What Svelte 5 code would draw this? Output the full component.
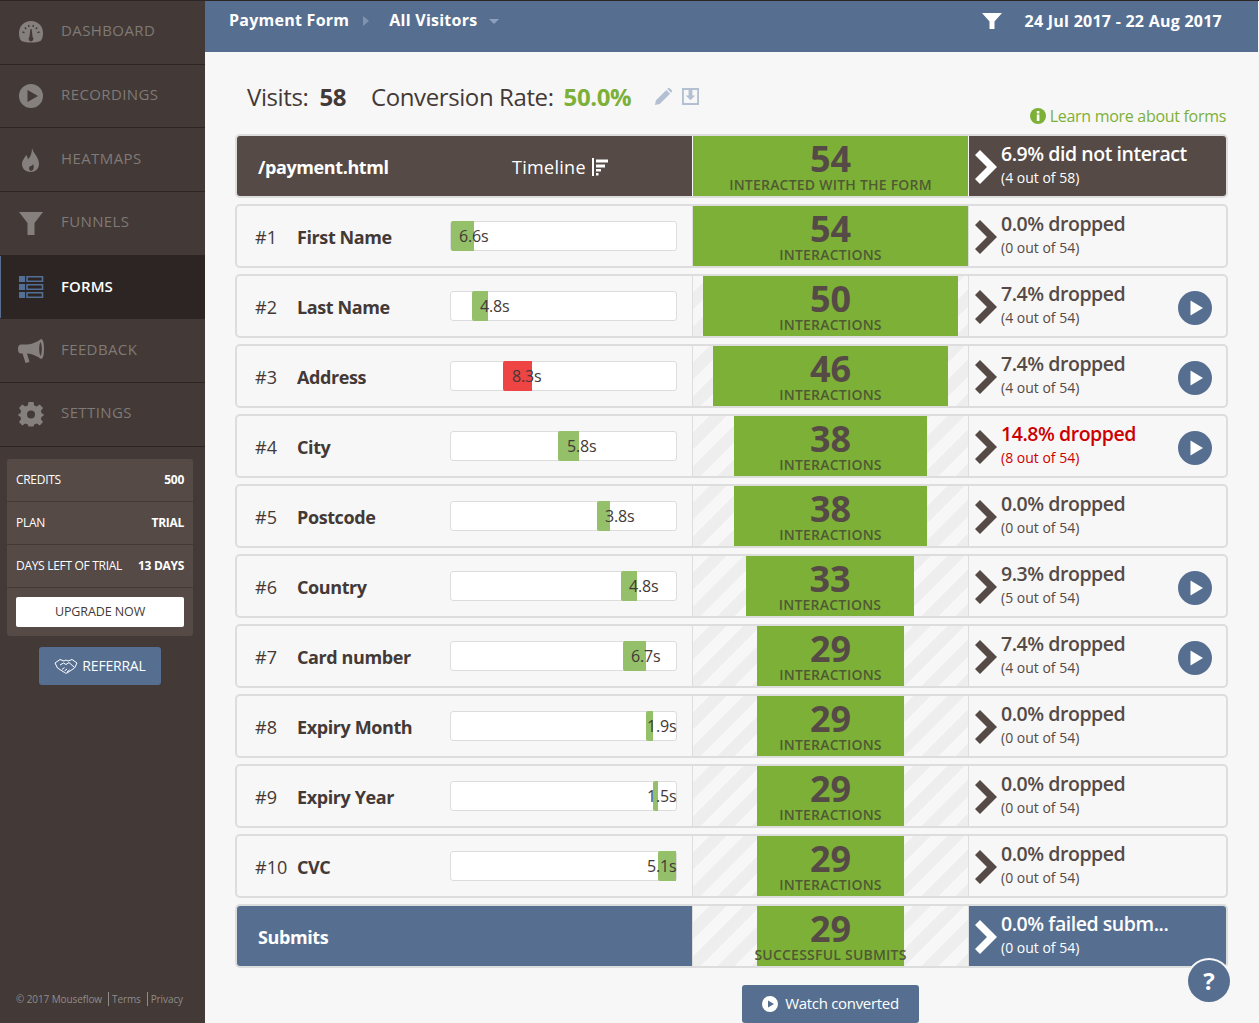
<script lang="ts">
  const nav = [
    { key: 'dashboard', label: 'Dashboard' },
    { key: 'recordings', label: 'Recordings' },
    { key: 'heatmaps', label: 'Heatmaps' },
    { key: 'funnels', label: 'Funnels' },
    { key: 'forms', label: 'Forms', active: true },
    { key: 'feedback', label: 'Feedback' },
    { key: 'settings', label: 'Settings' }
  ];

  // start/end are px inside the 225px track, textAt is where the time label sits
  const fields = [
    { n: 1, name: 'First Name', time: '6.6s', start: 0, end: 23, textAt: 8, count: 54, inset: 0, pct: '0.0%', of: '0 out of 54' },
    { n: 2, name: 'Last Name', time: '4.8s', start: 21, end: 37, textAt: 29, count: 50, inset: 10, pct: '7.4%', of: '4 out of 54', play: true },
    { n: 3, name: 'Address', time: '8.3s', start: 52, end: 81, textAt: 61, count: 46, inset: 20, pct: '7.4%', of: '4 out of 54', play: true, slow: true },
    { n: 4, name: 'City', time: '5.8s', start: 107, end: 128, textAt: 116, count: 38, inset: 41, pct: '14.8%', of: '8 out of 54', play: true, bad: true },
    { n: 5, name: 'Postcode', time: '3.8s', start: 146, end: 159, textAt: 154, count: 38, inset: 41, pct: '0.0%', of: '0 out of 54' },
    { n: 6, name: 'Country', time: '4.8s', start: 170, end: 186, textAt: 178, count: 33, inset: 53, right: 54, pct: '9.3%', of: '5 out of 54', play: true },
    { n: 7, name: 'Card number', time: '6.7s', start: 172, end: 195, textAt: 180, count: 29, inset: 64, pct: '7.4%', of: '4 out of 54', play: true },
    { n: 8, name: 'Expiry Month', time: '1.9s', start: 195, end: 202, textAt: 196, count: 29, inset: 64, pct: '0.0%', of: '0 out of 54' },
    { n: 9, name: 'Expiry Year', time: '1.5s', start: 202, end: 207, textAt: 196, count: 29, inset: 64, pct: '0.0%', of: '0 out of 54' },
    { n: 10, name: 'CVC', time: '5.1s', start: 207, end: 225, textAt: 196, count: 29, inset: 64, pct: '0.0%', of: '0 out of 54' }
  ];
</script>

{#snippet chevron()}
  <svg class="chevron" viewBox="0 0 24 36"><path d="M1 6 L6 1 L23 18 L6 35 L1 30 L13 18 Z" /></svg>
{/snippet}

<div class="app">
  <aside class="sidebar">
    <nav>
      {#each nav as item}
        <div class="nav-item" class:active={item.active}>
          <svg class="nav-icon" viewBox="0 0 26 26">
            {#if item.key === 'dashboard'}
              <path d="M13 2 C6 2 1 7 1 14 C1 18 2 20.5 3.5 22 C9 24 17 24 22.5 22 C24 20.5 25 18 25 14 C25 7 20 2 13 2 Z" />
              <path class="cut" d="M4.5 13 L6.5 13.6 M6.8 8.6 L8.2 10 M10.5 6 L11 8 M15.5 6 L15 8 M19.2 8.6 L17.8 10 M21.5 13 L19.5 13.6" />
              <path class="needle" d="M12.4 10 H13.6 L14.6 18 A2.4 2.4 0 1 1 11.4 18 Z" />
            {:else if item.key === 'recordings'}
              <path d="M13 1 A12 12 0 1 0 13 25 A12 12 0 1 0 13 1 Z M9.5 7 L20 13 L9.5 19 Z" fill-rule="evenodd" />
            {:else if item.key === 'heatmaps'}
              <path d="M14 1 C15 6 21 10 21 17 C21 22 17 25 13 25 C8 25 4 22 4 17 C4 13 7 11 8 8 C9.5 9.5 10 11 10 12.5 C12.5 10 14 6 14 1 Z M13 24 C16 23 16.5 20 15 17 C14.5 18.5 13.5 19 12.5 19 C10.5 20 10.5 23 13 24 Z" fill-rule="evenodd" />
            {:else if item.key === 'funnels'}
              <path d="M1 2 H25 L16.5 13 V25 H9.5 V13 Z" />
            {:else if item.key === 'forms'}
              <path d="M1 2 H7 V8 H1 Z M1 10 H7 V16 H1 Z M1 18 H7 V24 H1 Z" />
              <path class="outline" d="M9 2.8 H24.5 V7.2 H9 Z M9 10.8 H24.5 V15.2 H9 Z M9 18.8 H24.5 V23.2 H9 Z" />
            {:else if item.key === 'feedback'}
              <path d="M23 1 C25 1 26 5 26 11 C26 17 25 21 23 21 C20 19 16 16 9 15.5 L11.5 24 L7.5 25 L4.5 15.5 H3 C1 15.5 0 14 0 11 C0 8 1 6.5 3 6.5 H9 C16 6 20 3 23 1 Z M22.5 4 C21.5 6 21.2 8.5 21.2 11 C21.2 13.5 21.5 16 22.5 18 C23.5 16 23.8 13.5 23.8 11 C23.8 8.5 23.5 6 22.5 4 Z" fill-rule="evenodd" />
            {:else if item.key === 'settings'}
              <path d="M10.5 1 H15.5 L16.2 4.6 L18.7 5.6 L21.7 3.5 L25 7 L22.8 9.9 L23.8 12.4 L25.5 13 V15 L23.8 15.6 L22.8 18.1 L25 21 L21.7 24.5 L18.7 22.4 L16.2 23.4 L15.5 25.5 H10.5 L9.8 23.4 L7.3 22.4 L4.3 24.5 L1 21 L3.2 18.1 L2.2 15.6 L0.5 15 V13 L2.2 12.4 L3.2 9.9 L1 7 L4.3 3.5 L7.3 5.6 L9.8 4.6 Z M13 9.5 A4 4 0 1 0 13 17.5 A4 4 0 1 0 13 9.5 Z" fill-rule="evenodd" />
            {/if}
          </svg>
          <span>{item.label}</span>
        </div>
      {/each}
    </nav>

    <div class="account">
      <div class="account-row"><span>Credits</span><b>500</b></div>
      <div class="account-row"><span>Plan</span><b>Trial</b></div>
      <div class="account-row"><span>Days left of trial</span><b>13 days</b></div>
      <div class="upgrade-wrap"><div class="upgrade">Upgrade now</div></div>
    </div>

    <div class="referral">
      <svg viewBox="0 0 24 16" class="shake">
        <path d="M1 5 L6 1.5 L10 3 L12 2 L14 3 L18 1.5 L23 5 L20.5 10 L13 15 Q11.5 15.5 10.5 14.5 L3.5 10 Z M6 7 L9.5 5 L12 6.5 L15 4.5 L20 9 M8 11.5 L10.5 9.5 M10.5 13 L13 11 M13 14 L15.5 12" />
      </svg>
      <span>REFERRAL</span>
    </div>

    <div class="legal">
      <span>© 2017 Mouseflow</span><span class="sep">Terms</span><span class="sep">Privacy</span>
    </div>
  </aside>

  <main class="main">
    <header class="topbar">
      <div class="crumbs">
        <span>Payment Form</span>
        <i class="arrow-right"></i>
        <span>All Visitors</span>
        <i class="arrow-down"></i>
      </div>
      <div class="dates">
        <svg viewBox="0 0 20 20" class="filter"><path d="M0 2 H20 L12.5 10.5 V18 H7.5 V10.5 Z" /></svg>
        <span>24 Jul 2017 - 22 Aug 2017</span>
      </div>
    </header>

    <section class="summary">
      <div class="stats">
        <span>Visits:</span><b class="visits">58</b>
        <span class="rate-label">Conversion Rate:</span><b class="rate">50.0%</b>
        <svg class="tool edit" viewBox="0 0 18 18"><path d="M0 18 L1 13 L12 2 L16 6 L5 17 Z M13 1 L14.2 0 Q15 -0.3 15.8 0.4 L17.6 2.2 Q18.3 3 18 3.8 L17 5 Z" /></svg>
        <svg class="tool save" viewBox="0 0 18 18"><path d="M1 1 H17 V17 H1 Z" class="box" /><path d="M7 1 H11 V8 H14 L9 13 L4 8 H7 Z" /></svg>
      </div>
      <div class="learn">
        <svg viewBox="0 0 16 16"><circle cx="8" cy="8" r="8" /><rect class="i" x="6.8" y="6.5" width="2.6" height="6.5" /><rect class="i" x="6.8" y="3" width="2.6" height="2.5" /></svg>
        <span>Learn more about forms</span>
      </div>
    </section>

    <section class="table">
      <div class="row head">
        <div class="left">
          <span class="page">/payment.html</span>
          <span class="timeline">Timeline
            <svg viewBox="0 0 16 18"><path d="M0 0 H2 V18 H0 Z M4 1.5 H16 V4.5 H4 Z M4 6.5 H13 V9.5 H4 Z M4 11 H9 V13.5 H4 Z M4 15 H6.5 V17.5 H4 Z" /></svg>
          </span>
        </div>
        <div class="funnel">
          <div class="block">
            <div class="count">54</div>
            <div class="label">Interacted with the form</div>
          </div>
        </div>
        <div class="drop">
          {@render chevron()}
          <div class="drop-text">
            <div class="pct">6.9% did not interact</div>
            <div class="of">(4 out of 58)</div>
          </div>
        </div>
      </div>

      {#each fields as f}
        <div class="row">
          <div class="left">
            <span class="num">#{f.n}</span>
            <span class="name">{f.name}</span>
            <div class="track">
              <div class="fill" class:slow={f.slow} style="left:{f.start}px;width:{f.end - f.start}px"></div>
              <span class="time" style="left:{f.textAt}px">{f.time}</span>
            </div>
          </div>
          <div class="funnel" style="padding:0 {f.right ?? f.inset}px 0 {f.inset}px">
            <div class="block">
              <div class="count">{f.count}</div>
              <div class="label">Interactions</div>
            </div>
          </div>
          <div class="drop" class:bad={f.bad}>
            {@render chevron()}
            <div class="drop-text">
              <div class="pct">{f.pct} dropped</div>
              <div class="of">({f.of})</div>
            </div>
            {#if f.play}
              <svg class="play" viewBox="0 0 34 34"><circle cx="17" cy="17" r="17" /><path d="M12.5 9.5 L25 17 L12.5 24.5 Z" /></svg>
            {/if}
          </div>
        </div>
      {/each}

      <div class="row foot">
        <div class="left"><span class="page">Submits</span></div>
        <div class="funnel" style="padding:0 64px">
          <div class="block">
            <div class="count">29</div>
            <div class="label">Successful submits</div>
          </div>
        </div>
        <div class="drop">
          {@render chevron()}
          <div class="drop-text">
            <div class="pct">0.0% failed subm...</div>
            <div class="of">(0 out of 54)</div>
          </div>
        </div>
      </div>
    </section>

    <div class="watch">
      <svg viewBox="0 0 16 16"><path d="M8 0 A8 8 0 1 0 8 16 A8 8 0 1 0 8 0 Z M6 4.5 L12 8 L6 11.5 Z" fill-rule="evenodd" /></svg>
      <span>Watch converted</span>
    </div>

    <div class="help">?</div>
  </main>
</div>

<style>
  :global(body) {
    margin: 0;
    overflow: hidden;
    background: #f7f7f7;
  }

  .app {
    display: flex;
    width: 1259px;
    height: 1023px;
    overflow: hidden;
    font-family: "Open Sans", sans-serif;
    color: #554a46;
    border-top: 1px solid #2d2523;
    box-sizing: border-box;
  }

  /* sidebar */
  .sidebar {
    position: relative;
    flex: 0 0 205px;
    background: #433936;
    display: flex;
    flex-direction: column;
  }

  .nav-item {
    display: flex;
    align-items: center;
    height: 63.7px;
    box-sizing: border-box;
    padding-left: 18px;
    gap: 17px;
    border-bottom: 1px solid #2d2523;
    color: #7f7a77;
    font-size: 15px;
    letter-spacing: 0.4px;
    text-transform: uppercase;
  }

  .nav-item span {
    position: relative;
    top: -2px;
  }

  .nav-icon {
    width: 26px;
    height: 26px;
    fill: #85807d;
    flex: none;
  }

  .nav-icon .cut {
    stroke: #433936;
    stroke-width: 1.4;
    fill: none;
  }

  .nav-icon .needle {
    fill: #433936;
  }

  .nav-icon .outline {
    fill: none;
    stroke: #536f96;
    stroke-width: 1.6;
  }

  .nav-item.active {
    background: #2d2523;
    color: #fff;
    font-weight: 600;
    letter-spacing: 0.1px;
    box-shadow: inset 1px 0 0 #566f91;
    border-bottom-color: #2d2523;
  }

  .nav-item.active span {
    top: -1px;
  }

  .nav-item.active .nav-icon {
    fill: #536f96;
  }

  .account {
    margin: 12px 12px 0 7px;
    background: #554a46;
    border-radius: 3px;
    color: #fff;
    font-size: 12px;
    letter-spacing: -0.3px;
    text-transform: uppercase;
  }

  .account-row {
    display: flex;
    justify-content: space-between;
    align-items: center;
    height: 43px;
    padding: 0 9px;
    box-sizing: border-box;
    border-bottom: 1px solid #433936;
  }

  .upgrade-wrap {
    padding: 9px;
  }

  .upgrade {
    background: #fff;
    color: #433936;
    height: 30px;
    line-height: 30px;
    text-align: center;
    border-radius: 2px;
    font-size: 12.5px;
    letter-spacing: -0.1px;
  }

  .referral {
    margin: 11px 0 0 39px;
    width: 122px;
    height: 38px;
    box-sizing: border-box;
    background: #566f91;
    border-radius: 3px;
    color: #fff;
    font-size: 14px;
    letter-spacing: -0.2px;
    display: flex;
    align-items: center;
    justify-content: center;
    gap: 4px;
  }

  .shake {
    width: 24px;
    height: 16px;
    fill: none;
    stroke: #fff;
    stroke-width: 1;
  }

  .legal {
    margin-top: auto;
    padding: 0 0 17px 16px;
    font-size: 10px;
    letter-spacing: -0.1px;
    color: #908c8a;
    white-space: nowrap;
  }

  .sep {
    margin-left: 6px;
    padding-left: 3px;
    border-left: 1px solid #908c8a;
  }

  /* top bar and summary */
  .main {
    position: relative;
    flex: 1;
    min-width: 0;
    background: #f7f7f7;
  }

  .topbar {
    height: 51px;
    background: #566f91;
    color: #fff;
    font-size: 16px;
    font-weight: 700;
    letter-spacing: 0.25px;
    display: flex;
    justify-content: space-between;
    padding: 0 36px 0 24px;
    margin-right: 1px;
  }

  .crumbs {
    display: flex;
    align-items: center;
    height: 38px;
  }

  .arrow-right {
    margin: 2px 20px 0 14px;
    border: 5px solid transparent;
    border-left: 6px solid #7f93ad;
    border-right: 0;
  }

  .arrow-down {
    margin: 3px 0 0 12px;
    border: 5px solid transparent;
    border-top: 5px solid #8ba0ba;
    border-bottom: 0;
  }

  .dates {
    display: flex;
    align-items: center;
    height: 40px;
    gap: 23px;
  }

  .filter {
    width: 20px;
    height: 20px;
    fill: #fff;
  }

  .summary {
    height: 82px;
    padding: 0 33px 0 42px;
    position: relative;
    display: flex;
    justify-content: space-between;
    box-sizing: border-box;
  }

  .stats {
    display: flex;
    align-items: center;
    height: 88px;
    font-size: 24px;
    letter-spacing: -0.4px;
    color: #433936;
    white-space: nowrap;
  }

  .visits {
    margin-left: 11px;
  }

  .rate-label {
    margin-left: 25px;
  }

  .rate {
    margin-left: 10px;
    color: #7db037;
  }

  .tool {
    fill: #b3c0d2;
    width: 17px;
    height: 17px;
    margin-left: 24px;
  }

  .tool.save {
    margin-left: 10px;
  }

  .save .box {
    fill: none;
    stroke: #b3c0d2;
    stroke-width: 2;
  }

  .learn {
    align-self: flex-end;
    padding-bottom: 7px;
    display: flex;
    align-items: center;
    gap: 4px;
    color: #7db037;
    font-size: 16px;
    letter-spacing: -0.3px;
    white-space: nowrap;
  }

  .learn svg {
    width: 16px;
    height: 16px;
    fill: #7db037;
  }

  .learn .i {
    fill: #fff;
  }

  /* table */
  .table {
    margin: 0 31px 0 30px;
    display: flex;
    flex-direction: column;
    gap: 6px;
  }

  .row {
    display: flex;
    height: 64px;
    box-sizing: border-box;
    border: 2px solid #ddd;
    border-radius: 5px;
    background: #f7f7f7;
  }

  .left {
    flex: 0 0 456px;
    box-sizing: border-box;
    display: flex;
    align-items: center;
    padding-left: 18px;
    padding-top: 2px;
    border-right: 1px solid #ddd;
  }

  .num {
    width: 42px;
    font-size: 18px;
    color: #433936;
  }

  .name {
    width: 153px;
    font-size: 18px;
    font-weight: 700;
    letter-spacing: -0.4px;
    color: #433936;
    white-space: nowrap;
  }

  .track {
    position: relative;
    width: 225px;
    height: 28px;
    margin-top: -2px;
    background: #fff;
    border: 1px solid #ddd;
    border-radius: 3px;
  }

  .fill {
    position: absolute;
    top: -1px;
    bottom: -1px;
    background: #93c068;
    border-radius: 2px 0 0 2px;
  }

  .fill.slow {
    background: #ee4444;
  }

  .time {
    position: absolute;
    top: 0;
    line-height: 28px;
    font-size: 16px;
    letter-spacing: -0.15px;
    color: #433936;
  }

  .funnel {
    flex: 0 0 276px;
    min-width: 0;
    box-sizing: border-box;
    border-right: 1px solid #ddd;
    background: repeating-linear-gradient(135deg, #f7f7f7 0 12px, #eee 12px 24px);
  }

  .block {
    height: 100%;
    background: #7db037;
    text-align: center;
    overflow: visible;
  }

  .count {
    padding-top: 3px;
    font-size: 36px;
    line-height: 39px;
    font-weight: 700;
    color: #554a46;
  }

  .label {
    font-size: 14px;
    line-height: 14px;
    font-weight: 600;
    letter-spacing: 0.22px;
    color: #4f5a33;
    text-transform: uppercase;
    white-space: nowrap;
    display: flex;
    justify-content: center;
  }

  .drop {
    flex: 1;
    min-width: 0;
    display: flex;
    align-items: center;
    padding-left: 5px;
    position: relative;
  }

  .chevron {
    width: 24px;
    height: 36px;
    fill: #554a46;
    flex: none;
    margin-top: 2px;
  }

  .drop-text {
    margin-left: 3px;
    margin-top: -4px;
  }

  .pct {
    font-size: 19.5px;
    line-height: 27px;
    font-weight: 600;
    letter-spacing: -0.45px;
    color: #554a46;
    white-space: nowrap;
  }

  .of {
    font-size: 14px;
    line-height: 20px;
    margin-top: 1px;
    color: #554a46;
  }

  .bad .pct,
  .bad .of {
    color: #cc0000;
  }

  .play {
    position: absolute;
    right: 14px;
    top: 15px;
    width: 34px;
    height: 34px;
    fill: #566f91;
  }

  .play path {
    fill: #fff;
  }

  .head .left,
  .head .drop {
    background: #554a46;
    color: #fff;
  }

  .foot .left,
  .foot .drop {
    background: #566f91;
  }

  .head,
  .foot {
    overflow: hidden;
  }

  .head .left {
    border-right-color: #f7f7f7;
    padding-left: 21px;
  }

  .foot .left {
    border-right-color: #ddd;
    padding-left: 21px;
  }

  .page {
    font-size: 18px;
    font-weight: 700;
    letter-spacing: -0.4px;
    color: #fff;
    width: 254px;
  }

  .timeline {
    font-size: 18px;
    letter-spacing: 0.3px;
    color: #fff;
    display: flex;
    align-items: center;
    gap: 6px;
  }

  .timeline svg {
    width: 16px;
    height: 18px;
    fill: #fff;
  }

  .head .chevron,
  .foot .chevron {
    fill: #fff;
  }

  .head .pct,
  .head .of,
  .foot .pct,
  .foot .of {
    color: #fff;
  }

  .head .funnel {
    border-right-color: #f7f7f7;
  }

  /* bottom */
  .watch {
    margin: 17px 0 0 537px;
    width: 177px;
    height: 38px;
    box-sizing: border-box;
    background: #566f91;
    border-radius: 3px;
    color: #fff;
    font-size: 15px;
    letter-spacing: -0.3px;
    display: flex;
    align-items: center;
    justify-content: center;
    gap: 7px;
    padding-bottom: 3px;
  }

  .watch svg {
    width: 16px;
    height: 16px;
    fill: #fff;
    margin-top: 3px;
  }

  .help {
    position: absolute;
    left: 983px;
    top: 959px;
    width: 42px;
    height: 42px;
    line-height: 42px;
    text-align: center;
    border-radius: 50%;
    background: #566f91;
    box-shadow: 0 0 0 2px #f7f7f7;
    color: #fff;
    font-size: 24px;
    font-weight: 700;
  }
</style>
